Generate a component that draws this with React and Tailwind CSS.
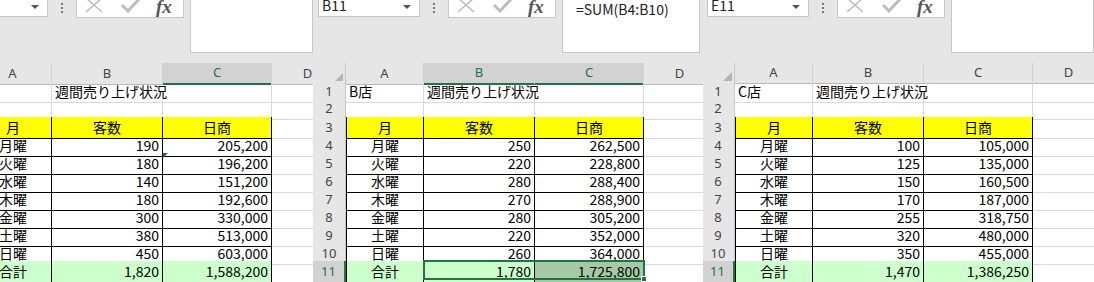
const days = ['月曜', '火曜', '水曜', '木曜', '金曜', '土曜', '日曜'];

const sheets = [
  {
    key: 'a',
    nameBox: '',
    formula: '',
    store: 'A店',
    rows: [
      ['190', '205,200'],
      ['180', '196,200'],
      ['140', '151,200'],
      ['180', '192,600'],
      ['300', '330,000'],
      ['380', '513,000'],
      ['450', '603,000'],
    ],
    total: ['1,820', '1,588,200'],
    panel: 'w-[313px]',
    inner: 'w-[372px] -ml-[59px]',
    formulaBox: 'flex-1',
    selCols: ['C'],
    selRow: true,
    range: false,
    errorMark: true,
  },
  {
    key: 'b',
    nameBox: 'B11',
    formula: '=SUM(B4:B10)',
    store: 'B店',
    rows: [
      ['250', '262,500'],
      ['220', '228,800'],
      ['280', '288,400'],
      ['270', '288,900'],
      ['280', '305,200'],
      ['220', '352,000'],
      ['260', '364,000'],
    ],
    total: ['1,780', '1,725,800'],
    panel: 'w-[390px]',
    inner: 'w-[390px]',
    formulaBox: 'flex-1 mr-[3px]',
    selCols: ['B', 'C'],
    selRow: true,
    range: true,
    errorMark: false,
  },
  {
    key: 'c',
    nameBox: 'E11',
    formula: '',
    store: 'C店',
    rows: [
      ['100', '105,000'],
      ['125', '135,000'],
      ['150', '160,500'],
      ['170', '187,000'],
      ['255', '318,750'],
      ['320', '480,000'],
      ['350', '455,000'],
    ],
    total: ['1,470', '1,386,250'],
    panel: 'w-[391px]',
    inner: 'w-[392px] -ml-[1px]',
    formulaBox: 'flex-1',
    selCols: [],
    selRow: true,
    range: false,
    errorMark: false,
  },
];

const jp = "font-['Noto_Sans_CJK_JP','Noto_Sans',sans-serif]";
const ui = "font-['Noto_Sans','Liberation_Sans',sans-serif]";
const grid = 'grid grid-cols-[33px_78px_111px_109px_72px_1fr] h-[18px]';

function Toolbar({ s }) {
  return (
    <div className="flex h-[63px] items-start bg-[#e6e6e6]">
      <div className={`ml-[5px] flex h-[17px] w-[102px] items-start justify-between border-x border-b border-[#c6c6c6] bg-white pl-[3px] pr-[8px] text-[14px] leading-[14px] text-[#222] ${jp}`}>
        <span className="-mt-[2px]">{s.nameBox}</span>
        <span className="mt-[5px] h-0 w-0 border-x-[4px] border-t-[4px] border-x-transparent border-t-[#555]" />
      </div>
      <div className="ml-[13px] flex flex-col gap-[2px] pt-[3px]">
        <span className="h-[2px] w-[2px] bg-[#777]" />
        <span className="h-[2px] w-[2px] bg-[#777]" />
        <span className="h-[2px] w-[2px] bg-[#777]" />
      </div>
      <div className="ml-[13px] flex h-[18px] w-[108px] items-start border-x border-b border-[#c6c6c6] bg-white pl-[7px]">
        <svg width="20" height="16" viewBox="0 0 20 16" className="-mt-[3px]">
          <path d="M2 1 L18 15 M18 1 L2 15" stroke="#bdbdbd" strokeWidth="1.6" fill="none" />
        </svg>
        <svg width="20" height="16" viewBox="0 0 20 16" className="ml-[17px] -mt-[3px]">
          <path d="M1 8 L7 14 L19 1" stroke="#bdbdbd" strokeWidth="3" fill="none" />
        </svg>
        <span className="ml-[15px] -mt-[3px] font-['Liberation_Serif',serif] text-[19px] leading-[20px] font-bold italic text-[#555]">fx</span>
      </div>
      <div className={`ml-[6px] h-[53px] border-x border-b border-[#c6c6c6] bg-white pl-[13px] pt-[1px] text-[14px] leading-[16px] text-[#222] ${jp} ${s.formulaBox}`}>
        {s.formula}
      </div>
    </div>
  );
}

function ColHeader({ s }) {
  const head = (c) =>
    s.selCols.includes(c)
      ? 'bg-[#d2d2d2] text-[#217346] border-b-2 border-b-[#217346]'
      : 'bg-[#e6e6e6] text-[#444] border-b border-b-[#b9b9b9]';
  return (
    <div className={`${grid} ${ui} text-[13px]`}>
      <div className="flex items-end justify-end border-r border-b border-[#c6c6c6] border-b-[#b9b9b9] bg-[#e6e6e6] p-[2px]">
        <span className="h-0 w-0 border-b-[9px] border-l-[9px] border-b-[#b5b5b5] border-l-transparent" />
      </div>
      {['A', 'B', 'C', 'D', 'E'].map((c) => (
        <div key={c} className={`flex items-center justify-center border-r border-r-[#d0d0d0] ${head(c)}`}>
          {c}
        </div>
      ))}
    </div>
  );
}

function RowNum({ n, sel }) {
  return (
    <div
      className={`flex items-center justify-center border-b border-b-[#d4d4d4] text-[13px] ${ui} ${
        sel ? 'border-r-2 border-r-[#217346] bg-[#d2d2d2] text-[#217346]' : 'border-r border-r-[#c6c6c6] bg-[#e6e6e6] text-[#444]'
      }`}
    >
      {n}
    </div>
  );
}

function Sheet({ s }) {
  const cell = `flex items-center border-r border-b px-[3px] text-[14px] ${jp}`;
  const plain = `${cell} border-[#d9d9d9]`;
  const boxed = `${cell} border-black`;
  return (
    <div className={`h-[282px] shrink-0 overflow-hidden ${s.panel}`}>
      <div className={`bg-white ${s.inner}`}>
        <Toolbar s={s} />
        <ColHeader s={s} />

        <div className={grid}>
          <RowNum n={1} />
          <div className={`${plain} whitespace-nowrap`}>{s.store}</div>
          <div className={`${plain} border-r-0 whitespace-nowrap`}>週間売り上げ状況</div>
          <div className={plain} />
          <div className={plain} />
          <div className={plain} />
        </div>

        <div className={grid}>
          <RowNum n={2} />
          <div className={`${plain} border-b-black`} />
          <div className={`${plain} border-b-black`} />
          <div className={`${plain} border-b-black`} />
          <div className={plain} />
          <div className={plain} />
        </div>

        <div className={grid}>
          <RowNum n={3} />
          <div className={`${boxed} border-l justify-center bg-[#ffff00]`}>月</div>
          <div className={`${boxed} justify-center bg-[#ffff00]`}>客数</div>
          <div className={`${boxed} justify-center bg-[#ffff00]`}>日商</div>
          <div className={plain} />
          <div className={plain} />
        </div>

        {s.rows.map((r, i) => (
          <div key={i} className={grid}>
            <RowNum n={i + 4} />
            <div className={`${boxed} border-l justify-center`}>{days[i]}</div>
            <div className={`${boxed} justify-end`}>{r[0]}</div>
            <div className={`${boxed} relative justify-end`}>
              {s.errorMark && i === 1 && (
                <span className="absolute left-0 top-0 h-0 w-0 border-r-[5px] border-t-[5px] border-r-transparent border-t-[#217346]" />
              )}
              {r[1]}
            </div>
            <div className={plain} />
            <div className={plain} />
          </div>
        ))}

        <div className={`${grid} relative`}>
          <RowNum n={11} sel={s.selRow} />
          <div className={`${boxed} border-l justify-center bg-[#ccffcc]`}>合計</div>
          <div className={`${boxed} justify-end bg-[#ccffcc]`}>{s.total[0]}</div>
          <div className={`${boxed} justify-end ${s.range ? 'bg-[#a4c9a4]' : 'bg-[#ccffcc]'}`}>{s.total[1]}</div>
          <div className={plain} />
          <div className={plain} />
          {s.range && (
            <div className="absolute left-[110px] top-[-1px] h-[20px] w-[222px] border-2 border-[#217346]">
              <span className="absolute -bottom-[4px] -right-[4px] h-[6px] w-[6px] border border-white bg-[#217346]" />
            </div>
          )}
        </div>

        <div className={grid}>
          <RowNum n={12} />
          <div className={plain} />
          <div className={plain} />
          <div className={plain} />
          <div className={plain} />
          <div className={plain} />
        </div>
      </div>
    </div>
  );
}

export default function App() {
  return (
    <div className="flex h-[282px] w-[1094px] overflow-hidden bg-white">
      {sheets.map((s) => (
        <Sheet key={s.key} s={s} />
      ))}
    </div>
  );
}
